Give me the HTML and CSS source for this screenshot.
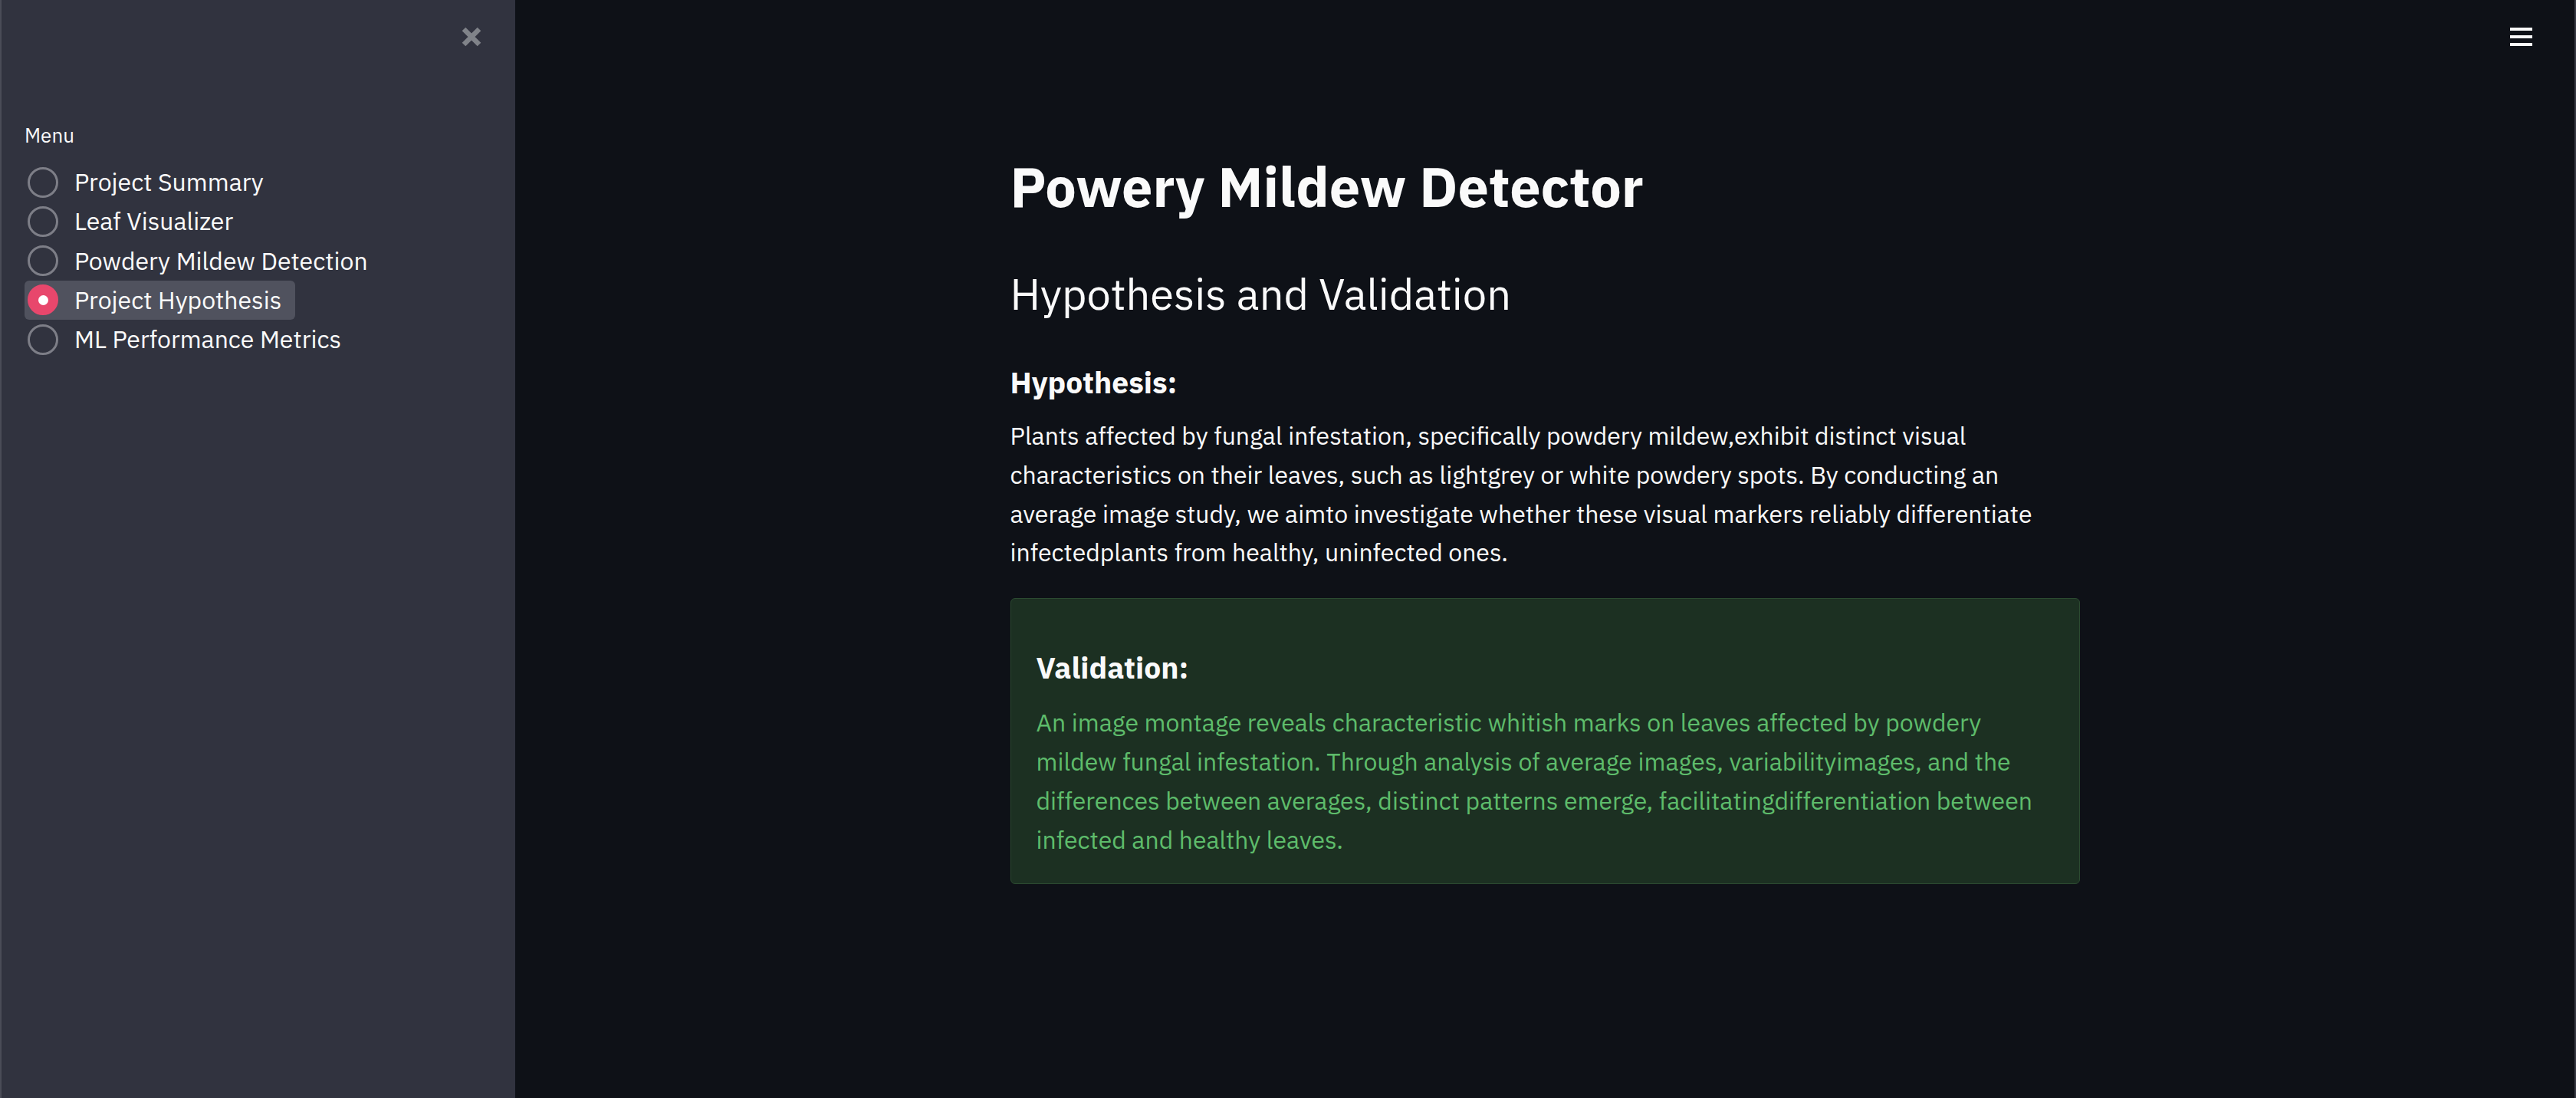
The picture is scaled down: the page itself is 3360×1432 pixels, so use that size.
FILE: index.html
```html
<!DOCTYPE html>
<html lang="en">
<head>
<meta charset="utf-8">
<title>Powery Mildew Detector</title>
<link rel="stylesheet" href="styles.css">
</head>
<body>
<div class="app">
  <aside class="sidebar">
    <div class="sidebar-header">
      <button class="close-btn" aria-label="Close sidebar">
        <svg width="28" height="28" viewBox="0 0 28 28"><path d="M4 4 L24 24 M24 4 L4 24" stroke="#808389" stroke-width="6.5" stroke-linecap="butt"/></svg>
      </button>
    </div>
    <div class="menu-label">Menu</div>
    <ul class="radio-list">
      <li class="radio-item"><span class="radio"></span><span class="radio-text">Project Summary</span></li>
      <li class="radio-item"><span class="radio"></span><span class="radio-text">Leaf Visualizer</span></li>
      <li class="radio-item"><span class="radio"></span><span class="radio-text">Powdery Mildew Detection</span></li>
      <li class="radio-item selected"><span class="radio"></span><span class="radio-text">Project Hypothesis</span></li>
      <li class="radio-item"><span class="radio"></span><span class="radio-text">ML Performance Metrics</span></li>
    </ul>
  </aside>
  <main class="main">
    <header class="topbar">
      <button class="menu-btn" aria-label="Main menu">
        <span></span><span></span><span></span>
      </button>
    </header>
    <section class="content">
      <h1 class="title">Powery Mildew Detector</h1>
      <h2 class="subtitle">Hypothesis and Validation</h2>
      <h3 class="section-head">Hypothesis:</h3>
      <p class="body-text">Plants affected by fungal infestation, specifically powdery mildew,exhibit distinct visual characteristics on their leaves, such as lightgrey or white powdery spots. By conducting an average image study, we aimto investigate whether these visual markers reliably differentiate infectedplants from healthy, uninfected ones.</p>
      <div class="success-box">
        <h3 class="section-head box-head">Validation:</h3>
        <p class="body-text green">An image montage reveals characteristic whitish marks on leaves affected by powdery mildew fungal infestation. Through analysis of average images, variabilityimages, and the differences between averages, distinct patterns emerge, facilitatingdifferentiation between infected and healthy leaves.</p>
      </div>
    </section>
  </main>
</div>
</body>
</html>
```
FILE: styles.css
```css
* { box-sizing: border-box; }
html, body {
  margin: 0;
  padding: 0;
  height: 100%;
  background: #0e1117;
  color: #fafafa;
  font-family: "IBM Plex Sans", Roboto, "Noto Sans", sans-serif;
}
.app {
  display: flex;
  height: 100vh;
  overflow: hidden;
}
.sidebar {
  width: 672px;
  flex: 0 0 672px;
  background: #31333f;
  border-left: 2px solid #4a4c57;
  padding: 0 0 0 30px;
}
.sidebar-header {
  height: 96px;
  display: flex;
  justify-content: flex-end;
  align-items: center;
  padding-right: 29px;
}
.close-btn {
  width: 56px;
  height: 56px;
  border: 0;
  background: transparent;
  display: flex;
  align-items: center;
  justify-content: center;
  padding: 0;
}
.menu-label {
  margin-top: 63px;
  font-size: 26px;
  line-height: 34px;
  color: #fafafa;
}
.radio-list {
  list-style: none;
  margin: 19px 0 0 0;
  padding: 0;
}
.radio-item {
  display: flex;
  align-items: center;
  height: 51.25px;
  width: max-content;
  padding: 0 18px 0 4px;
  border-radius: 6px;
  font-size: 32px;
}
.radio-item.selected {
  background: #50525e;
}
.radio {
  width: 40px;
  height: 40px;
  border-radius: 50%;
  border: 3px solid #7d7e87;
  margin-right: 21px;
  flex: 0 0 40px;
  display: flex;
  align-items: center;
  justify-content: center;
}
.selected .radio {
  background: #e8476c;
  border-color: #e8476c;
}
.selected .radio::after {
  content: "";
  width: 13px;
  height: 13px;
  border-radius: 50%;
  background: #ffffff;
}
.radio-text {
  line-height: 51px;
}
.main {
  flex: 1;
  display: flex;
  flex-direction: column;
  border-right: 2px solid #393b45;
}
.topbar {
  height: 96px;
  display: flex;
  justify-content: flex-end;
  align-items: center;
  padding-right: 42px;
}
.menu-btn {
  width: 56px;
  height: 56px;
  border: 0;
  background: transparent;
  display: flex;
  flex-direction: column;
  align-items: center;
  justify-content: center;
  gap: 6px;
  padding: 0;
}
.menu-btn span {
  display: block;
  width: 29px;
  height: 4px;
  background: #fafafa;
}
.content {
  width: 1395px;
  margin: 102px auto 0;
}
.title {
  margin: 0;
  font-size: 72px;
  font-weight: 700;
  line-height: 91px;
}
.subtitle {
  margin: 61px 0 0;
  font-size: 56px;
  font-weight: 400;
  line-height: 67px;
}
.section-head {
  margin: 58px 0 0;
  font-size: 39px;
  font-weight: 700;
  line-height: 48px;
}
.body-text {
  margin: 20px 0 0;
  font-size: 32px;
  line-height: 50.8px;
}
.success-box {
  margin-top: 34px;
  background: #1c3022;
  border: 1px solid #2c4a31;
  border-radius: 6px;
  padding: 66px 33px 32px;
}
.box-head {
  margin: 0;
}
.green {
  color: #5ebc6b;
  margin-top: 22px;
}
```
